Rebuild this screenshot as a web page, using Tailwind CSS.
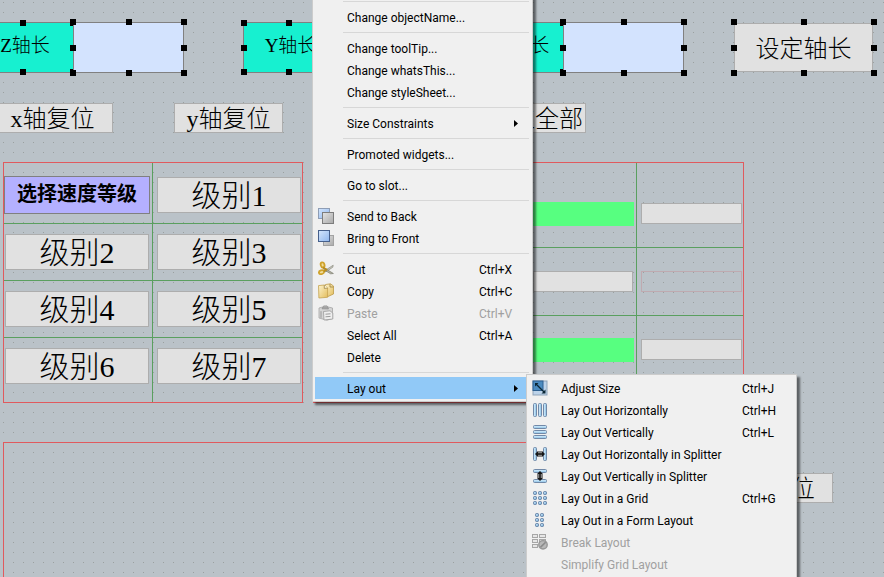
<!DOCTYPE html>
<html lang="zh-CN">
<head>
<meta charset="utf-8">
<meta name="viewport" content="width=device-width, initial-scale=1">
<title>Form designer</title>
<script src="https://cdn.jsdelivr.net/npm/@tailwindcss/browser@4"></script>
</head>
<body class="overflow-hidden text-black font-['Liberation_Serif','Noto_Sans_CJK_SC',serif]">

<svg class="absolute h-0 w-0" aria-hidden="true">
  <defs>
    <linearGradient id="blue" x1="0" y1="0" x2="1" y2="1"><stop offset="0" stop-color="#d4e6fc"/><stop offset="1" stop-color="#8fb6ee"/></linearGradient>
    <linearGradient id="gray" x1="0" y1="0" x2="1" y2="1"><stop offset="0" stop-color="#e4e4e4"/><stop offset="1" stop-color="#a9a9a9"/></linearGradient>
    <linearGradient id="barV" x1="0" y1="0" x2="1" y2="0"><stop offset="0" stop-color="#e2f4ff"/><stop offset="1" stop-color="#84bde4"/></linearGradient>
    <linearGradient id="barH" x1="0" y1="0" x2="0" y2="1"><stop offset="0" stop-color="#e2f4ff"/><stop offset="1" stop-color="#84bde4"/></linearGradient>
    <linearGradient id="cell" x1="0" y1="0" x2="1" y2="1"><stop offset="0" stop-color="#d5ecfb"/><stop offset="1" stop-color="#6fa6d2"/></linearGradient>
    <linearGradient id="paper" x1="0" y1="0" x2="1" y2="1"><stop offset="0" stop-color="#fdf3cd"/><stop offset="1" stop-color="#e3bd5c"/></linearGradient>
  </defs>
</svg>

<main class="relative min-h-screen overflow-hidden bg-[#bac2c8]">
  <svg class="absolute inset-0 h-full w-full" aria-hidden="true">
    <defs><pattern id="dots" width="10" height="10" patternUnits="userSpaceOnUse"><rect x="3" y="2" width="1" height="1" fill="#9aa09f"/></pattern></defs>
    <rect width="100%" height="100%" fill="url(#dots)"/>
  </svg>

  <!-- axis length fields -->
  <div data-selected class="absolute -left-7 top-[22px] flex h-[51px] w-[102px] items-center justify-center border border-[#808080] bg-[#17f0d0] pb-1 pl-1 text-[19px] font-light leading-none"><label for="z-len">Z轴长</label></div>
  <div data-selected class="absolute left-[73px] top-[22px] h-[51px] w-[111px]"><input id="z-len" class="h-full w-full border border-[#808080] bg-[#d3e3fe] px-2"></div>
  <div data-selected class="absolute left-[243px] top-[22px] flex h-[51px] w-[91px] items-center justify-center border border-[#808080] bg-[#17f0d0] pb-1 pl-1 text-[19px] font-light leading-none"><label for="y-len">Y轴长</label></div>
  <div data-selected class="absolute left-[333px] top-[22px] h-[51px] w-[111px]"><input id="y-len" class="h-full w-full border border-[#808080] bg-[#d3e3fe] px-2"></div>
  <div data-selected class="absolute left-[483px] top-[22px] flex h-[51px] w-[81px] items-center justify-center border border-[#808080] bg-[#17f0d0] pb-1 text-[19px] font-light leading-none"><label for="x-len">X轴长</label></div>
  <div data-selected class="absolute left-[563px] top-[22px] h-[51px] w-[121px]"><input id="x-len" class="h-full w-full border border-[#808080] bg-[#d3e3fe] px-2"></div>
  <div data-selected class="absolute left-[734px] top-[22px] h-[51px] w-[140px] py-px pr-px"><button class="h-full w-full border border-[#adadad] bg-[#e1e1e1] pt-0.5 text-2xl font-light leading-none">设定轴长</button></div>

  <!-- axis reset buttons -->
  <button class="absolute -left-2 top-[103px] h-[30px] w-[121px] border border-[#adadad] bg-[#e1e1e1] pt-0.5 text-2xl font-light leading-none">x轴复位</button>
  <button class="absolute left-[174px] top-[103px] h-[30px] w-[109px] border border-[#adadad] bg-[#e1e1e1] pt-0.5 text-2xl font-light leading-none">y轴复位</button>
  <button class="absolute left-[484px] top-[103px] h-[30px] w-[102px] border border-[#adadad] bg-[#e1e1e1] pt-0.5 text-2xl font-light leading-none">复位全部</button>
  <button class="absolute left-[714px] top-[473px] h-[30px] w-[119px] border border-[#adadad] bg-[#e1e1e1] pt-0.5 text-2xl font-light leading-none">z轴复位</button>

  <!-- speed level grid -->
  <section class="absolute left-[3px] top-[162px] grid w-[300px] grid-cols-2 border border-[#e05a5e] text-3xl font-light leading-none [&_button]:pt-0.5">
    <div class="border-r border-b border-[#5a9f5f] pt-[13px] pr-[2px] pb-[9px]"><div class="flex h-[38px] items-center justify-center border border-[#808080] bg-[#b4b0ff] pb-0.5 text-xl font-bold leading-none">选择速度等级</div></div>
    <div class="border-b border-[#5a9f5f] pt-[14px] pr-px pb-[9px] pl-1"><button class="h-9 w-full border border-[#adadad] bg-[#e1e1e1]">级别1</button></div>
    <div class="border-r border-b border-[#5a9f5f] py-[10px] pr-[3px] pl-px"><button class="h-9 w-full border border-[#adadad] bg-[#e1e1e1]">级别2</button></div>
    <div class="border-b border-[#5a9f5f] py-[10px] pr-px pl-1"><button class="h-9 w-full border border-[#adadad] bg-[#e1e1e1]">级别3</button></div>
    <div class="border-r border-b border-[#5a9f5f] py-[10px] pr-[3px] pl-px"><button class="h-9 w-full border border-[#adadad] bg-[#e1e1e1]">级别4</button></div>
    <div class="border-b border-[#5a9f5f] py-[10px] pr-px pl-1"><button class="h-9 w-full border border-[#adadad] bg-[#e1e1e1]">级别5</button></div>
    <div class="border-r border-[#5a9f5f] pt-[10px] pr-[3px] pb-[18px] pl-px"><button class="h-9 w-full border border-[#adadad] bg-[#e1e1e1]">级别6</button></div>
    <div class="pt-[10px] pr-px pb-[18px] pl-1"><button class="h-9 w-full border border-[#adadad] bg-[#e1e1e1]">级别7</button></div>
  </section>

  <!-- direction pad grid -->
  <section class="absolute left-[313px] top-[162px] grid h-[241px] w-[431px] grid-cols-[215px_108px_1fr] grid-rows-[85px_68px_1fr] border border-[#e05a5e]">
    <div class="border-r border-b border-[#5a9f5f]"></div>
    <div class="border-r border-b border-[#5a9f5f] pt-[39px] pr-[2px] pl-1"><div class="h-6 bg-[#57ff80]"></div></div>
    <div class="border-b border-[#5a9f5f] pt-10 pr-px pl-1"><button aria-label="上" class="block h-[21px] w-full border border-[#adadad] bg-[#e1e1e1]"></button></div>
    <div class="border-r border-b border-[#5a9f5f]"></div>
    <div class="border-r border-b border-[#5a9f5f] pt-[23px] pr-[3px] pl-1"><button aria-label="左" class="block h-[21px] w-full border border-[#adadad] bg-[#e1e1e1]"></button></div>
    <div class="border-b border-[#5a9f5f] pt-[23px] pr-px pl-1"><div class="h-[21px] border border-[#bfaab0]"></div></div>
    <div class="border-r border-[#5a9f5f]"></div>
    <div class="border-r border-[#5a9f5f] pt-[22px] pr-[2px] pl-1"><div class="h-6 bg-[#57ff80]"></div></div>
    <div class="pt-[23px] pr-px pl-1"><button aria-label="下" class="block h-[21px] w-full border border-[#adadad] bg-[#e1e1e1]"></button></div>
  </section>

  <section class="absolute left-[3px] top-[442px] h-[160px] w-[711px] border border-[#e05a5e]"></section>

  <!-- context menu -->
  <div role="menu" class="absolute left-[312px] -top-[6px] w-[221px] border border-[#cccccc] bg-[#f0f0f0] p-[2px] font-['Roboto','Noto_Sans',sans-serif] text-xs shadow-[3px_3px_2px_0_rgba(0,0,0,0.5)] [&_svg]:-mt-0.5 [&>button]:pt-0.5">
    <hr class="mt-1 mr-px mb-1 ml-7 border-t border-[#d7d7d7]">
    <button role="menuitem" class="flex h-[22px] w-full items-center pl-8">Change objectName...</button>
    <hr class="my-1 mr-px ml-7 border-t border-[#d7d7d7]">
    <button role="menuitem" class="flex h-[22px] w-full items-center pl-8">Change toolTip...</button>
    <button role="menuitem" class="flex h-[22px] w-full items-center pl-8">Change whatsThis...</button>
    <button role="menuitem" class="flex h-[22px] w-full items-center pl-8">Change styleSheet...</button>
    <hr class="my-1 mr-px ml-7 border-t border-[#d7d7d7]">
    <button role="menuitem" class="flex h-[22px] w-full items-center justify-between pr-3 pl-8">Size Constraints<svg width="4" height="7"><path d="M0 0L4 3.5L0 7z"/></svg></button>
    <hr class="my-1 mr-px ml-7 border-t border-[#d7d7d7]">
    <button role="menuitem" class="flex h-[22px] w-full items-center pl-8">Promoted widgets...</button>
    <hr class="my-1 mr-px ml-7 border-t border-[#d7d7d7]">
    <button role="menuitem" class="flex h-[22px] w-full items-center pl-8">Go to slot...</button>
    <hr class="my-1 mr-px ml-7 border-t border-[#d7d7d7]">
    <button role="menuitem" class="flex h-[22px] w-full items-center gap-[13px] pl-[3px]">
      <svg width="16" height="16"><rect x=".5" y=".5" width="11" height="10" fill="url(#blue)" stroke="#8e9db5"/><rect x="4.5" y="4.5" width="11" height="11" fill="url(#gray)" stroke="#7d7d7d"/></svg>Send to Back</button>
    <button role="menuitem" class="flex h-[22px] w-full items-center gap-[13px] pl-[3px]">
      <svg width="16" height="16"><rect x="5.5" y="5.5" width="10" height="10" fill="url(#gray)" stroke="#a2a2a2"/><rect x=".5" y=".5" width="11" height="11" fill="url(#blue)" stroke="#46608c"/></svg>Bring to Front</button>
    <hr class="my-1 mr-px ml-7 border-t border-[#d7d7d7]">
    <button role="menuitem" class="flex h-[22px] w-full items-center gap-[13px] pl-[3px] text-left">
      <svg width="16" height="16"><path d="M5.5 10.5L15.2 4.2L14.8 6.2L8 10.8z" fill="#c9c9bd" stroke="#8b8b80" stroke-width=".7"/><path d="M5 6L15.4 12.5L12.6 12.8L6 8.8z" fill="#aeaea0" stroke="#7e7e70" stroke-width=".7"/><ellipse cx="4.6" cy="3.9" rx="1.9" ry="2.6" transform="rotate(-15 4.6 3.9)" fill="#f0dc9a" stroke="#cfa22b" stroke-width="1.8"/><ellipse cx="3.5" cy="11.2" rx="2.6" ry="1.9" transform="rotate(-20 3.5 11.2)" fill="#f0dc9a" stroke="#cfa22b" stroke-width="1.8"/><path d="M5 6.4L9 8.8M5.8 10.4L9 8.4" stroke="#b98d1f" stroke-width="1.8"/></svg><span class="flex-1">Cut</span><span class="w-[51px]">Ctrl+X</span></button>
    <button role="menuitem" class="flex h-[22px] w-full items-center gap-[13px] pl-[3px] text-left">
      <svg width="16" height="16"><path d="M7.5 1.5L12.5.8L15.5 3V11L10 13.5L7.5 12z" fill="url(#paper)" stroke="#bd9a48" stroke-width=".8"/><path d="M12 1V4H15.3" fill="none" stroke="#9b8241" stroke-width=".8"/><path d="M.5 2.6L6.3 2L9.6 5V14.3L.9 15z" fill="url(#paper)" stroke="#c4a24f" stroke-width=".8"/><path d="M6.3 2V5.4L9.6 5" fill="#fffbe6" stroke="#9b8241" stroke-width=".8"/></svg><span class="flex-1">Copy</span><span class="w-[51px]">Ctrl+C</span></button>
    <button role="menuitem" disabled class="flex h-[22px] w-full items-center gap-[13px] pl-[3px] text-left text-[#a0a0a0]">
      <svg width="16" height="16"><path d="M1 3L4.5 2L6 .8H9L10 2L14.5 3V13.5L9 15.2L1 13z" fill="#d5d5d5" stroke="#a5a5a5" stroke-width=".8"/><path d="M4 3.8L5 1.8H9.6L10.5 4z" fill="#aaa" stroke="#858585" stroke-width=".6"/><path d="M5.5 6.5L12 5.8L14.8 8V14L6 15z" fill="#efefef" stroke="#999" stroke-width=".8"/><path d="M3 6.2V12.8M7.5 9.2L12.5 8.8M7.5 11.8L12.5 11.4" stroke="#9a9a9a"/></svg><span class="flex-1">Paste</span><span class="w-[51px]">Ctrl+V</span></button>
    <button role="menuitem" class="flex h-[22px] w-full items-center pl-8 text-left"><span class="flex-1">Select All</span><span class="w-[51px]">Ctrl+A</span></button>
    <button role="menuitem" class="flex h-[22px] w-full items-center pl-8">Delete</button>
    <hr class="my-1 mr-px ml-7 border-t border-[#d7d7d7]">
    <button role="menuitem" class="flex h-[22px] w-full items-center justify-between bg-[#91c9f7] pr-3 pl-8">Lay out<svg width="4" height="7"><path d="M0 0L4 3.5L0 7z"/></svg></button>
  </div>

  <!-- layout submenu -->
  <div role="menu" class="absolute left-[526px] top-[374px] w-[271px] border border-[#cccccc] bg-[#f0f0f0] p-[2px] font-['Roboto','Noto_Sans',sans-serif] text-xs shadow-[3px_3px_2px_0_rgba(0,0,0,0.5)] [&_svg]:-mt-0.5 [&>button]:pt-0.5">
    <button role="menuitem" class="flex h-[22px] w-full items-center gap-[13px] pl-[3px] text-left">
      <svg width="16" height="16"><rect x="1" y="1" width="14" height="14" fill="#bcd3ea" stroke="#8fa3b8"/><rect x="1" y="1" width="10" height="9.5" fill="#4b8bc0" stroke="#2c5f90"/><path d="M4 4L12 12" stroke="#0a2634" stroke-width="1.3"/><path d="M3 3H6.5L3 6.5zM13.5 13.5V9.5L9.5 13.5z" fill="#0a2634"/></svg><span class="flex-1">Adjust Size</span><span class="w-[52px]">Ctrl+J</span></button>
    <button role="menuitem" class="flex h-[22px] w-full items-center gap-[13px] pl-[3px] text-left">
      <svg width="16" height="16" fill="url(#barV)" stroke="#7189a8"><rect x="1.5" y="1.5" width="3" height="13" rx="1"/><rect x="6.5" y="1.5" width="3" height="13" rx="1"/><rect x="11.5" y="1.5" width="3" height="13" rx="1"/></svg><span class="flex-1">Lay Out Horizontally</span><span class="w-[52px]">Ctrl+H</span></button>
    <button role="menuitem" class="flex h-[22px] w-full items-center gap-[13px] pl-[3px] text-left">
      <svg width="16" height="16" fill="url(#barH)" stroke="#7189a8"><rect x="1.5" y="1.5" width="13" height="3" rx="1"/><rect x="1.5" y="6.5" width="13" height="3" rx="1"/><rect x="1.5" y="11.5" width="13" height="3" rx="1"/></svg><span class="flex-1">Lay Out Vertically</span><span class="w-[52px]">Ctrl+L</span></button>
    <button role="menuitem" class="flex h-[22px] w-full items-center gap-[13px] pl-[3px] text-left">
      <svg width="16" height="16"><g fill="url(#barV)" stroke="#7189a8"><rect x="1.5" y="1.5" width="3" height="13" rx="1"/><rect x="11.5" y="1.5" width="3" height="13" rx="1"/></g><path d="M3 8L6 5V7.3H10V5L13 8L10 11V8.7H6V11zM6.5 5H7.5V11H6.5zM8.5 5H9.5V11H8.5z" fill="#161616"/></svg>Lay Out Horizontally in Splitter</button>
    <button role="menuitem" class="flex h-[22px] w-full items-center gap-[13px] pl-[3px] text-left">
      <svg width="16" height="16"><g fill="url(#barH)" stroke="#7189a8"><rect x="1.5" y="1.5" width="13" height="3" rx="1"/><rect x="1.5" y="11.5" width="13" height="3" rx="1"/></g><path d="M8 3L11 6H8.7V10H11L8 13L5 10H7.3V6H5zM5 6.5H11V7.5H5zM5 8.5H11V9.5H5z" fill="#161616"/></svg>Lay Out Vertically in Splitter</button>
    <button role="menuitem" class="flex h-[22px] w-full items-center gap-[13px] pl-[3px] text-left">
      <svg width="16" height="16" fill="url(#cell)" stroke="#5f7ea3"><rect x="1.5" y="1.5" width="3" height="3" rx="1"/><rect x="6.5" y="1.5" width="3" height="3" rx="1"/><rect x="11.5" y="1.5" width="3" height="3" rx="1"/><rect x="1.5" y="6.5" width="3" height="3" rx="1"/><rect x="6.5" y="6.5" width="3" height="3" rx="1"/><rect x="11.5" y="6.5" width="3" height="3" rx="1"/><rect x="1.5" y="11.5" width="3" height="3" rx="1"/><rect x="6.5" y="11.5" width="3" height="3" rx="1"/><rect x="11.5" y="11.5" width="3" height="3" rx="1"/></svg><span class="flex-1">Lay Out in a Grid</span><span class="w-[52px]">Ctrl+G</span></button>
    <button role="menuitem" class="flex h-[22px] w-full items-center gap-[13px] pl-[3px] text-left">
      <svg width="16" height="16" fill="url(#cell)" stroke="#5f7ea3"><rect x="3.5" y="1.5" width="3" height="3" rx="1"/><rect x="8.5" y="1.5" width="3" height="3" rx="1"/><rect x="3.5" y="6.5" width="3" height="3" rx="1"/><rect x="8.5" y="6.5" width="3" height="3" rx="1"/><rect x="3.5" y="11.5" width="3" height="3" rx="1"/><rect x="8.5" y="11.5" width="3" height="3" rx="1"/></svg>Lay Out in a Form Layout</button>
    <button role="menuitem" disabled class="flex h-[22px] w-full items-center gap-[13px] pl-[3px] text-left text-[#a0a0a0]">
      <svg width="16" height="16"><g fill="#e6e6e6" stroke="#a6a6a6"><rect x=".5" y=".5" width="5" height="3"/><rect x="7.5" y=".5" width="6" height="3"/><rect x=".5" y="5.5" width="5" height="3"/><rect x=".5" y="10.5" width="5" height="3"/><rect x="7.5" y="5.5" width="6" height="3"/></g><circle cx="11" cy="10.8" r="4.2" fill="#b8b8b8" stroke="#969696" stroke-width="1.4"/><path d="M8.4 13.4L13.6 8.2" stroke="#8b8b8b" stroke-width="1.6"/></svg>Break Layout</button>
    <button role="menuitem" disabled class="flex h-[22px] w-full items-center pl-8 text-[#a0a0a0]">Simplify Grid Layout</button>
  </div>
</main>

<template id="handles">
  <div class="pointer-events-none absolute -inset-[3px] grid grid-cols-[6px_6px_6px] grid-rows-[6px_6px_6px] content-between justify-between">
    <i class="bg-black"></i><i class="bg-black"></i><i class="bg-black"></i>
    <i class="bg-black"></i><i></i><i class="bg-black"></i>
    <i class="bg-black"></i><i class="bg-black"></i><i class="bg-black"></i>
  </div>
</template>
<script>
  const handles = document.getElementById('handles');
  document.querySelectorAll('[data-selected]').forEach(el => el.append(handles.content.cloneNode(true)));
</script>
</body>
</html>
